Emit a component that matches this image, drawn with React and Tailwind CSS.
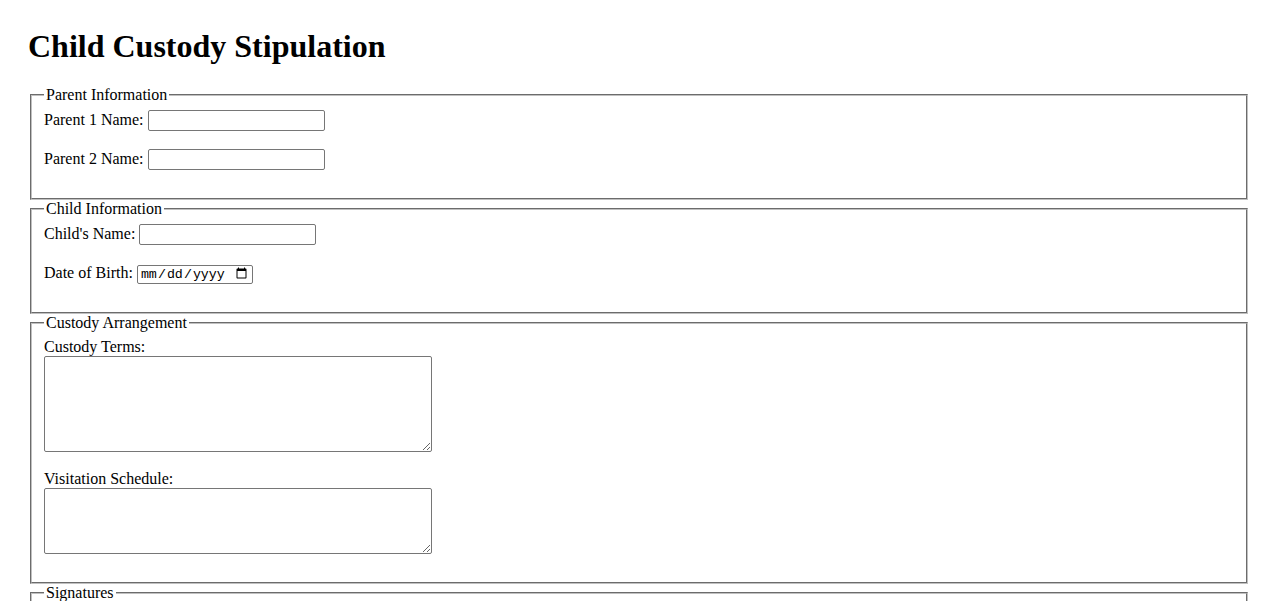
import React from 'react';

const field =
  'h-[21px] w-[177px] rounded-[2px] border border-[#767676] bg-white px-[2px] py-[1px] align-baseline font-["Liberation_Sans",Arial,sans-serif] text-[13.33px] text-black';

const area =
  'block w-[388px] rounded-[2px] border border-[#767676] bg-white p-[2px] font-["Liberation_Mono",monospace] text-[13.33px]';

function Section({ title, children }) {
  return (
    <fieldset className="mx-[2px] border-2 border-[#c0c0c0] px-[12px] pt-[5.6px] pb-[10px] [border-style:groove]">
      <legend className="px-[2px]">{title}</legend>
      {children}
    </fieldset>
  );
}

function Row({ label, gap = 'mb-[18px]', children }) {
  return (
    <div className={gap}>
      <label>{label}</label> {children}
    </div>
  );
}

export default function App() {
  const [form, setForm] = React.useState({});
  const set = (k) => (e) => setForm({ ...form, [k]: e.target.value });

  return (
    <div className='min-h-screen bg-white px-[28px] pt-[28px] font-["Liberation_Serif","Times_New_Roman",serif] text-[16px] leading-[normal] text-black'>
      <h1 className="mb-[21.44px] text-[32px] font-bold leading-[normal]">Child Custody Stipulation</h1>

      <form onSubmit={(e) => e.preventDefault()}>
        <Section title="Parent Information">
          <Row label="Parent 1 Name:">
            <input type="text" className={field} value={form.p1 || ''} onChange={set('p1')} />
          </Row>
          <Row label="Parent 2 Name:">
            <input type="text" className={field} value={form.p2 || ''} onChange={set('p2')} />
          </Row>
        </Section>

        <Section title="Child Information">
          <Row label="Child's Name:" gap="mb-[19px]">
            <input type="text" className={field} value={form.child || ''} onChange={set('child')} />
          </Row>
          <Row label="Date of Birth:">
            <input
              type="date"
              className='h-[19px] w-[116px] rounded-[2px] border border-[#767676] bg-white px-[2px] align-baseline font-["Liberation_Mono",monospace] text-[13.33px]'
              value={form.dob || ''}
              onChange={set('dob')}
            />
          </Row>
        </Section>

        <Section title="Custody Arrangement">
          <div className="mt-[1px] mb-[18px]">
            <label className="block">Custody Terms:</label>
            <textarea className={`${area} h-[96px]`} value={form.terms || ''} onChange={set('terms')} />
          </div>
          <div className="mb-[18px]">
            <label className="block">Visitation Schedule:</label>
            <textarea className={`${area} h-[66px]`} value={form.visits || ''} onChange={set('visits')} />
          </div>
        </Section>

        <Section title="Signatures">
          <Row label="Parent 1 Signature:">
            <input type="text" className={field} />
          </Row>
          <Row label="Parent 2 Signature:">
            <input type="text" className={field} />
          </Row>
        </Section>

        <button type="submit" className="mt-[10px] mb-[28px] rounded-[2px] border border-[#767676] bg-[#efefef] px-[6px] py-[1px] font-['Liberation_Sans',Arial,sans-serif] text-[13.33px]">
          Submit
        </button>
      </form>
    </div>
  );
}
